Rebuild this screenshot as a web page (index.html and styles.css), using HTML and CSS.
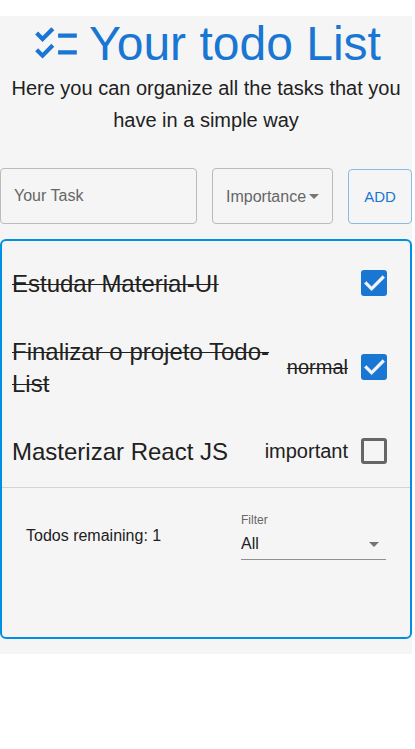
FILE: index.html
```html
<!DOCTYPE html>
<html lang="en">
<head>
<meta charset="utf-8">
<meta name="viewport" content="width=device-width, initial-scale=1">
<title>Your todo List</title>
<link rel="stylesheet" href="styles.css">
</head>
<body>
<main class="page">
  <header class="header">
    <h1 class="title">
      <svg class="title-icon" viewBox="0 0 24 24" aria-hidden="true"><path d="M22 7h-9v2h9V7zm0 8h-9v2h9v-2zM5.54 11 2 7.46l1.41-1.41 2.12 2.12 4.24-4.24 1.41 1.41L5.54 11zm0 8L2 15.46l1.41-1.41 2.12 2.12 4.24-4.24 1.41 1.41L5.54 19z"/></svg>
      <span>Your todo List</span>
    </h1>
    <p class="subtitle">Here you can organize all the tasks that you have in a simple way</p>
  </header>
  <form class="task-form">
    <input class="task-input" type="text" placeholder="Your Task" aria-label="Your Task">
    <div class="select-wrap">
      <select class="importance" aria-label="Importance">
        <option>Importance</option>
        <option>normal</option>
        <option>important</option>
      </select>
      <svg class="arrow" viewBox="0 0 24 24" aria-hidden="true"><path d="M7 10l5 5 5-5z"/></svg>
    </div>
    <button class="add" type="button">ADD</button>
  </form>
  <section class="card">
    <ul class="todos">
      <li class="todo done">
        <label class="todo-name" for="t1">Estudar Material-UI</label>
        <span class="check"><input id="t1" type="checkbox" checked><svg viewBox="0 0 24 24" aria-hidden="true"><path d="M10 17 5 12l1.41-1.41L10 14.17l7.59-7.59L19 8z"/></svg></span>
      </li>
      <li class="todo done">
        <label class="todo-name" for="t2">Finalizar o projeto Todo-List</label>
        <span class="level">normal</span>
        <span class="check"><input id="t2" type="checkbox" checked><svg viewBox="0 0 24 24" aria-hidden="true"><path d="M10 17 5 12l1.41-1.41L10 14.17l7.59-7.59L19 8z"/></svg></span>
      </li>
      <li class="todo">
        <label class="todo-name" for="t3">Masterizar React JS</label>
        <span class="level">important</span>
        <span class="check"><input id="t3" type="checkbox"></span>
      </li>
    </ul>
    <footer class="footer">
      <p class="remaining">Todos remaining: 1</p>
      <div class="filter">
        <label class="filter-label" for="filter">Filter</label>
        <div class="select-wrap">
          <select class="filter-select" id="filter">
            <option>All</option>
            <option>Done</option>
            <option>Active</option>
          </select>
          <svg class="arrow" viewBox="0 0 24 24" aria-hidden="true"><path d="M7 10l5 5 5-5z"/></svg>
        </div>
      </div>
    </footer>
  </section>
</main>
</body>
</html>
```
FILE: styles.css
```css
* {
  box-sizing: border-box;
}

body {
  margin: 0;
  background: #fff;
  color: #212121;
  font-family: "Liberation Sans", Arial, sans-serif;
  font-size: 16px;
}

input,
select,
button {
  margin: 0;
  font: inherit;
  color: inherit;
  background: transparent;
  appearance: none;
}

.page {
  margin: 16px 3px 0 0;
  padding-bottom: 15px;
  background: #f5f5f5;
}

.header {
  text-align: center;
}

.title {
  display: flex;
  align-items: center;
  justify-content: center;
  gap: 8px;
  margin: 0;
  color: #1976d2;
  font-size: 48px;
  font-weight: 400;
  line-height: 56px;
}

.title-icon {
  width: 50px;
  height: 50px;
  fill: currentColor;
}

.subtitle {
  margin: 0;
  font-size: 20px;
  line-height: 32px;
}

.task-form {
  display: flex;
  align-items: flex-end;
  gap: 15px;
  margin: 32px 0 15px;
}

.task-input {
  flex: 1;
  min-width: 0;
  height: 56px;
  padding: 0 13px;
  border: 1px solid #bbb;
  border-radius: 4px;
}

.task-input::placeholder {
  color: #666;
  opacity: 1;
}

.select-wrap {
  display: grid;
  align-items: center;
}

.select-wrap > * {
  grid-area: 1 / 1;
}

.arrow {
  justify-self: end;
  width: 24px;
  height: 24px;
  fill: #757575;
  pointer-events: none;
}

.importance {
  width: 121px;
  height: 56px;
  padding: 0 13px;
  border: 1px solid #bbb;
  border-radius: 4px;
  color: #666;
}

.task-form .arrow {
  margin-right: 7px;
}

.add {
  width: 64px;
  height: 55px;
  padding: 0;
  border: 1px solid #8cb9e6;
  border-radius: 4px;
  color: #1976d2;
  font-size: 15px;
}

.card {
  min-height: 400px;
  padding-top: 6px;
  border: 2px solid #0090e3;
  border-radius: 6px;
}

.todos {
  margin: 0;
  padding: 0;
  list-style: none;
}

.todo {
  display: flex;
  align-items: center;
  min-height: 72px;
  padding: 0 23px 0 10px;
}

.todo-name {
  flex: 1;
  padding: 17px 0 15px;
  font-size: 24px;
  line-height: 32px;
}

.level {
  margin-left: 12px;
  font-size: 20px;
  line-height: 32px;
}

.done .todo-name,
.done .level {
  text-decoration: line-through;
  text-decoration-thickness: 1px;
}

.check {
  display: grid;
  place-items: center;
  margin-left: 13px;
}

.check > * {
  grid-area: 1 / 1;
}

.check input {
  width: 26px;
  height: 26px;
  border: 3px solid #666;
  border-radius: 3px;
}

.check input:checked {
  border-color: #1976d2;
  background: #1976d2;
}

.check svg {
  width: 35px;
  height: 35px;
  margin: -5px;
  fill: #f5f5f5;
  stroke: #f5f5f5;
  stroke-width: 0.3;
  pointer-events: none;
}

.footer {
  display: flex;
  align-items: center;
  justify-content: space-between;
  padding: 24px;
  border-top: 1px solid #d3d3d3;
}

.remaining {
  margin: 0;
  line-height: 24px;
}

.filter {
  width: 145px;
}

.filter-label {
  display: block;
  color: #666;
  font-size: 12px;
  line-height: 16px;
}

.filter-select {
  height: 32px;
  padding: 0;
  border: 0;
  border-bottom: 1px solid #8f8f8f;
  border-radius: 0;
}
```
